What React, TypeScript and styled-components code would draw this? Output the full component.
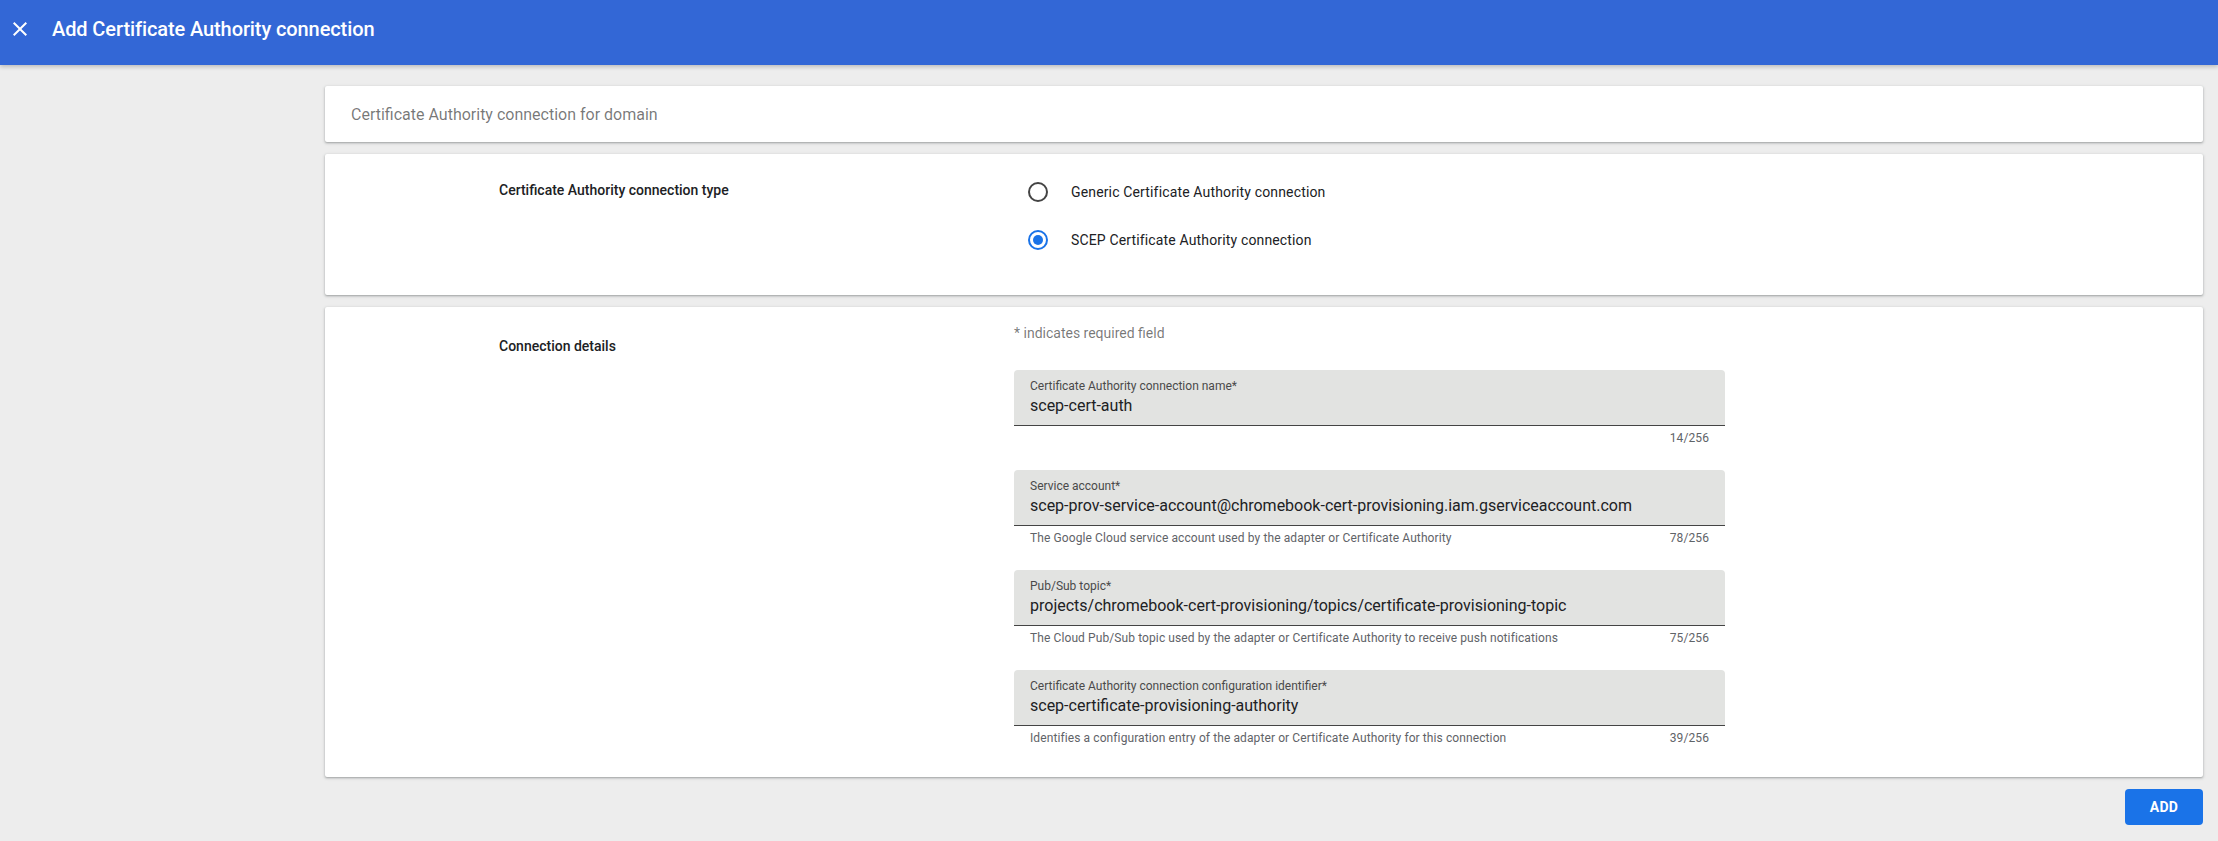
import React, { useState } from "react";
import styled, { createGlobalStyle } from "styled-components";

const GlobalStyle = createGlobalStyle`
  html, body {
    margin: 0;
    padding: 0;
    background: #ededed;
    font-family: Roboto, "Liberation Sans", Arial, sans-serif;
  }
`;

type Field = {
  label: string;
  value: string;
  helper?: string;
};

const fields: Field[] = [
  {
    label: "Certificate Authority connection name*",
    value: "scep-cert-auth",
  },
  {
    label: "Service account*",
    value: "scep-prov-service-account@chromebook-cert-provisioning.iam.gserviceaccount.com",
    helper: "The Google Cloud service account used by the adapter or Certificate Authority",
  },
  {
    label: "Pub/Sub topic*",
    value: "projects/chromebook-cert-provisioning/topics/certificate-provisioning-topic",
    helper: "The Cloud Pub/Sub topic used by the adapter or Certificate Authority to receive push notifications",
  },
  {
    label: "Certificate Authority connection configuration identifier*",
    value: "scep-certificate-provisioning-authority",
    helper: "Identifies a configuration entry of the adapter or Certificate Authority for this connection",
  },
];

const Page = styled.div`
  min-height: 841px;
  background: #ededed;
`;

const TopBar = styled.header`
  height: 65px;
  background: #3367d6;
  display: flex;
  align-items: center;
  padding: 0 0 7px 8px;
  box-sizing: border-box;
  box-shadow: 0 2px 4px rgba(0, 0, 0, 0.2);
  position: relative;
  z-index: 1;
`;

const CloseButton = styled.button`
  width: 24px;
  height: 24px;
  padding: 0;
  border: 0;
  background: transparent;
  color: #fff;
  display: flex;
  cursor: pointer;
`;

const Title = styled.h1`
  margin: 0 0 0 20px;
  font-size: 20px;
  font-weight: 500;
  color: #fff;
  letter-spacing: -0.1px;
`;

const Main = styled.main`
  padding: 21px 15px 15px 325px;
  display: flex;
  flex-direction: column;
  gap: 12px;
`;

const Card = styled.section`
  background: #fff;
  border-radius: 2px;
  box-shadow: 0 1px 2px 0 rgba(60, 64, 67, 0.35), 0 1px 3px 1px rgba(60, 64, 67, 0.1);
`;

const DomainCard = styled(Card)`
  height: 56px;
  display: flex;
  align-items: center;
  padding: 0 26px;
  font-size: 16px;
  color: rgba(0, 0, 0, 0.54);
`;

const SectionGrid = styled(Card)<{ $top: number; $bottom: number }>`
  display: grid;
  grid-template-columns: 515px 711px;
  padding: ${(p) => p.$top}px 0 ${(p) => p.$bottom}px 174px;
`;

const SectionLabel = styled.div<{ $offset: number }>`
  margin-top: ${(p) => p.$offset}px;
  font-size: 14px;
  line-height: 20px;
  font-weight: 500;
  color: #202124;
`;

const RadioGroup = styled.div`
  display: flex;
  flex-direction: column;
`;

const RadioRow = styled.label`
  height: 48px;
  display: flex;
  align-items: center;
  cursor: pointer;
  font-size: 14px;
  letter-spacing: 0.15px;
  color: #202124;
`;

const RadioHit = styled.span`
  width: 48px;
  display: flex;
  justify-content: center;
  margin-right: 9px;
`;

const RadioCircle = styled.span<{ $checked: boolean }>`
  width: 20px;
  height: 20px;
  box-sizing: border-box;
  border-radius: 50%;
  border: 2px solid ${(p) => (p.$checked ? "#1a73e8" : "#444")};
  display: flex;
  align-items: center;
  justify-content: center;
  &::after {
    content: "";
    width: 10px;
    height: 10px;
    border-radius: 50%;
    background: #1a73e8;
    display: ${(p) => (p.$checked ? "block" : "none")};
  }
`;

const FormColumn = styled.div`
  display: flex;
  flex-direction: column;
`;

const RequiredNote = styled.div`
  font-size: 14px;
  line-height: 20px;
  color: rgba(0, 0, 0, 0.54);
  margin-bottom: 27px;
`;

const FieldBlock = styled.div`
  margin-bottom: 20px;
  &:last-child {
    margin-bottom: 0;
  }
`;

const FieldFill = styled.div`
  background: #e2e3e1;
  border-radius: 4px 4px 0 0;
  border-bottom: 1px solid #444;
  padding: 8px 16px 7px;
  height: 40px;
`;

const FieldLabel = styled.div`
  font-size: 12px;
  line-height: 16px;
  color: #4a4a4a;
`;

const FieldValue = styled.div`
  font-size: 16px;
  line-height: 24px;
  color: #202124;
  white-space: nowrap;
`;

const HelperRow = styled.div`
  display: flex;
  justify-content: space-between;
  padding: 4px 16px 4px;
  font-size: 12px;
  letter-spacing: 0.1px;
  line-height: 16px;
  color: #5f6368;
`;

const Counter = styled.span`
  margin-left: auto;
`;

const Actions = styled.div`
  display: flex;
  justify-content: flex-end;
`;

const AddButton = styled.button`
  width: 78px;
  height: 36px;
  border: 0;
  border-radius: 4px;
  background: #1a73e8;
  color: #fff;
  font-family: Roboto, "Liberation Sans", Arial, sans-serif;
  font-size: 14px;
  font-weight: 700;
  letter-spacing: 0.25px;
  cursor: pointer;
`;

const CloseIcon = () => (
  <svg width="24" height="24" viewBox="0 0 24 24" fill="currentColor">
    <path d="M19 6.41L17.59 5 12 10.59 6.41 5 5 6.41 10.59 12 5 17.59 6.41 19 12 13.41 17.59 19 19 17.59 13.41 12z" />
  </svg>
);

export default function App() {
  const [type, setType] = useState("scep");

  return (
    <Page>
      <GlobalStyle />
      <TopBar>
        <CloseButton aria-label="Close">
          <CloseIcon />
        </CloseButton>
        <Title>Add Certificate Authority connection</Title>
      </TopBar>
      <Main>
        <DomainCard>Certificate Authority connection for domain</DomainCard>

        <SectionGrid $top={14} $bottom={31}>
          <SectionLabel $offset={12}>Certificate Authority connection type</SectionLabel>
          <RadioGroup>
            <RadioRow onClick={() => setType("generic")}>
              <RadioHit>
                <RadioCircle $checked={type === "generic"} />
              </RadioHit>
              Generic Certificate Authority connection
            </RadioRow>
            <RadioRow onClick={() => setType("scep")}>
              <RadioHit>
                <RadioCircle $checked={type === "scep"} />
              </RadioHit>
              SCEP Certificate Authority connection
            </RadioRow>
          </RadioGroup>
        </SectionGrid>

        <SectionGrid $top={16} $bottom={27}>
          <SectionLabel $offset={13}>Connection details</SectionLabel>
          <FormColumn>
            <RequiredNote>* indicates required field</RequiredNote>
            {fields.map((f) => (
              <FieldBlock key={f.label}>
                <FieldFill>
                  <FieldLabel>{f.label}</FieldLabel>
                  <FieldValue>{f.value}</FieldValue>
                </FieldFill>
                <HelperRow>
                  {f.helper && <span>{f.helper}</span>}
                  <Counter>{f.value.length}/256</Counter>
                </HelperRow>
              </FieldBlock>
            ))}
          </FormColumn>
        </SectionGrid>

        <Actions>
          <AddButton>ADD</AddButton>
        </Actions>
      </Main>
    </Page>
  );
}
